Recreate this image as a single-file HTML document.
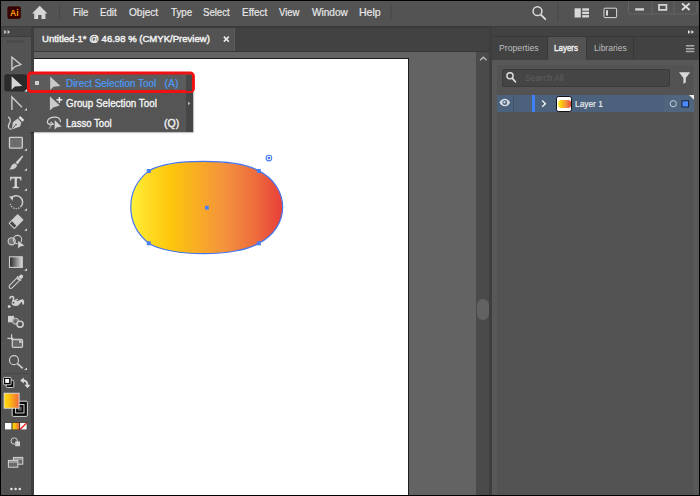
<!DOCTYPE html>
<html><head><meta charset="utf-8">
<style>
*{margin:0;padding:0;box-sizing:border-box}
html,body{width:700px;height:496px;overflow:hidden;background:#000}
body{font-family:"Liberation Sans",sans-serif;position:relative}
.a{position:absolute}
.tx{position:absolute;white-space:nowrap;transform-origin:0 50%;display:block}
svg{position:absolute;left:0;top:0;overflow:visible}
</style></head><body>
<!-- menu bar -->
<div class="a" style="left:1px;top:1px;width:698px;height:25px;background:#535353"></div>
<div class="a" style="left:1px;top:26px;width:698px;height:1px;background:#3b3b3b;z-index:2"></div>
<div class="a" style="left:31px;top:27px;width:458px;height:1px;background:#3b3b3b;z-index:2"></div>
<!-- doc tab strip -->
<div class="a" style="left:31px;top:27px;width:458px;height:24px;background:#424242"></div>
<div class="a" style="left:34px;top:28px;width:201px;height:23px;background:#535353;border-right:1px solid #5c5c5c"></div>
<div class="a" style="left:31px;top:51px;width:458px;height:1px;background:#383838"></div>
<!-- canvas area -->
<div class="a" style="left:34px;top:52px;width:442px;height:443px;background:#636363"></div>
<div class="a" style="left:34px;top:57.6px;width:375px;height:438px;background:#1c1c1c"></div>
<div class="a" style="left:34px;top:58.6px;width:374px;height:437px;background:#fff"></div>
<!-- v scrollbar -->
<div class="a" style="left:476px;top:52px;width:13px;height:443px;background:#4a4a4a"></div>
<div class="a" style="left:477px;top:299px;width:12px;height:21px;border-radius:6px;background:#626262"></div>
<!-- left toolbar -->
<div class="a" style="left:1px;top:27px;width:30px;height:468px;background:#535353"></div>
<div class="a" style="left:1px;top:27px;width:30px;height:9px;background:#464646"></div>
<div class="a" style="left:1px;top:36px;width:30px;height:1px;background:#3c3c3c"></div>
<div class="a" style="left:31px;top:27px;width:3px;height:468px;background:#3e3e3e"></div>
<div class="a" style="left:3px;top:373px;width:26px;height:1px;background:#484848"></div>
<!-- right dock -->
<div class="a" style="left:489px;top:27px;width:3px;height:468px;background:#3e3e3e"></div>
<div class="a" style="left:492px;top:27px;width:207px;height:468px;background:#585858"></div>
<div class="a" style="left:492px;top:27px;width:207px;height:9px;background:#424242"></div>
<div class="a" style="left:492px;top:36px;width:207px;height:1px;background:#383838"></div>
<div class="a" style="left:492px;top:37px;width:207px;height:23px;background:#424242"></div>
<div class="a" style="left:548px;top:37px;width:38px;height:23px;background:#535353"></div>
<div class="a" style="left:547px;top:37px;width:1px;height:22px;background:#383838"></div>
<div class="a" style="left:586px;top:37px;width:1px;height:22px;background:#383838"></div>
<div class="a" style="left:633px;top:37px;width:1px;height:22px;background:#383838"></div>
<div class="a" style="left:497px;top:65px;width:198px;height:430px;background:#535353"></div>
<div class="a" style="left:694px;top:65px;width:1.3px;height:430px;background:#5d5d5d"></div>
<div class="a" style="left:0;top:494.7px;width:700px;height:1.3px;background:#000"></div>
<!-- search box -->
<div class="a" style="left:502px;top:69px;width:168px;height:18px;background:#454545;border:1px solid #3b3b3b;border-radius:2px"></div>
<!-- layer row -->
<div class="a" style="left:497px;top:95px;width:197px;height:17px;background:#4c627c"></div>
<div class="a" style="left:513px;top:95px;width:1.4px;height:17px;background:#40536a"></div>
<div class="a" style="left:532px;top:95px;width:3px;height:17px;background:#4080f5"></div>
<div class="a" style="left:664px;top:95px;width:30px;height:17px;background:#50667f"></div>
<div class="a" style="left:556px;top:95.5px;width:16px;height:16.5px;background:#fff;border:1px solid #111;border-radius:2.5px"></div>
<div class="a" style="left:558px;top:100px;width:12.5px;height:7.5px;border-radius:3px;background:linear-gradient(90deg,#fff33b 0%,#fdc70c 26%,#f3903f 63%,#ed683c 84%,#e93e3a 100%)"></div>
<!-- flyout -->
<div class="a" style="left:29px;top:73px;width:164px;height:58.5px;background:#555555;box-shadow:0.8px 1.2px 1.6px rgba(0,0,0,.6)"></div>
<div class="a" style="left:186px;top:73px;width:7px;height:58.5px;background:#464646"></div>
<svg width="700" height="496" viewBox="0 0 700 496"><rect x="28.4" y="73.1" width="165" height="18.4" rx="3" fill="#5c5c5c" stroke="#f01212" stroke-width="3"/></svg>
<div class="a" style="left:186px;top:74.5px;width:6px;height:16px;background:#484848"></div>
<div class="a" style="left:35px;top:81.3px;width:4px;height:4.2px;background:#cfcfcf"></div>
<span class="tx" style="left:72.92px;top:5.06px;font-size:10.5px;line-height:14px;color:#e8e8e8;transform:scaleX(0.9071);-webkit-text-stroke:0.2px #e8e8e8">File</span>
<span class="tx" style="left:100.31px;top:5.06px;font-size:10.5px;line-height:14px;color:#e8e8e8;transform:scaleX(0.9209);-webkit-text-stroke:0.2px #e8e8e8">Edit</span>
<span class="tx" style="left:129.24px;top:5.06px;font-size:10.5px;line-height:14px;color:#e8e8e8;transform:scaleX(0.9600);-webkit-text-stroke:0.2px #e8e8e8">Object</span>
<span class="tx" style="left:171.28px;top:5.06px;font-size:10.5px;line-height:14px;color:#e8e8e8;transform:scaleX(0.9258);-webkit-text-stroke:0.2px #e8e8e8">Type</span>
<span class="tx" style="left:203.36px;top:5.06px;font-size:10.5px;line-height:14px;color:#e8e8e8;transform:scaleX(0.9108);-webkit-text-stroke:0.2px #e8e8e8">Select</span>
<span class="tx" style="left:241.59px;top:5.06px;font-size:10.5px;line-height:14px;color:#e8e8e8;transform:scaleX(0.9500);-webkit-text-stroke:0.2px #e8e8e8">Effect</span>
<span class="tx" style="left:279.40px;top:5.06px;font-size:10.5px;line-height:14px;color:#e8e8e8;transform:scaleX(0.9055);-webkit-text-stroke:0.2px #e8e8e8">View</span>
<span class="tx" style="left:312.00px;top:5.06px;font-size:10.5px;line-height:14px;color:#e8e8e8;transform:scaleX(0.9600);-webkit-text-stroke:0.2px #e8e8e8">Window</span>
<span class="tx" style="left:359.25px;top:5.06px;font-size:10.5px;line-height:14px;color:#e8e8e8;transform:scaleX(1.0049);-webkit-text-stroke:0.2px #e8e8e8">Help</span>
<span class="tx" style="left:41.50px;top:33.41px;font-size:9.5px;line-height:12px;color:#f0f0f0;transform:scaleX(1.0053);-webkit-text-stroke:0.45px #f0f0f0">Untitled-1* @ 46.98 % (CMYK/Preview)</span>
<span class="tx" style="left:65.69px;top:76.16px;font-size:10.5px;line-height:14px;color:#4a9af8;transform:scaleX(0.9445);-webkit-text-stroke:0.2px #4a9af8">Direct Selection Tool</span>
<span class="tx" style="left:164.40px;top:76.16px;font-size:10.5px;line-height:14px;color:#4a9af8;transform:scaleX(1.0000);-webkit-text-stroke:0.2px #4a9af8">(A)</span>
<span class="tx" style="left:66.05px;top:96.06px;font-size:10.5px;line-height:14px;color:#f4f4f4;transform:scaleX(0.9339);-webkit-text-stroke:0.35px #f4f4f4">Group Selection Tool</span>
<span class="tx" style="left:65.83px;top:115.66px;font-size:10.5px;line-height:14px;color:#f4f4f4;transform:scaleX(0.9125);-webkit-text-stroke:0.35px #f4f4f4">Lasso Tool</span>
<span class="tx" style="left:163.50px;top:115.66px;font-size:10.5px;line-height:14px;color:#f4f4f4;transform:scaleX(1.0053);-webkit-text-stroke:0.35px #f4f4f4">(Q)</span>
<span class="tx" style="left:498.88px;top:41.88px;font-size:9px;line-height:12px;color:#bebebe;transform:scaleX(0.9650)">Properties</span>
<span class="tx" style="left:554.45px;top:41.88px;font-size:9px;line-height:12px;color:#f6f6f6;transform:scaleX(0.8876);-webkit-text-stroke:0.35px #f6f6f6">Layers</span>
<span class="tx" style="left:593.69px;top:41.88px;font-size:9px;line-height:12px;color:#bebebe;transform:scaleX(0.9468)">Libraries</span>
<span class="tx" style="left:524.54px;top:71.58px;font-size:9px;line-height:12px;color:#5f5f5f;transform:scaleX(0.9544)">Search All</span>
<span class="tx" style="left:575.02px;top:98.18px;font-size:9px;line-height:12px;color:#f0f0f0;transform:scaleX(0.9276);-webkit-text-stroke:0.15px #f0f0f0">Layer 1</span><svg width="700" height="496" viewBox="0 0 700 496">
<defs>
<linearGradient id="og" x1="0" y1="0" x2="1" y2="0">
<stop offset="0" stop-color="#fff33b"/><stop offset="0.09" stop-color="#ffdf28"/><stop offset="0.26" stop-color="#fdc70c"/><stop offset="0.63" stop-color="#f3903f"/><stop offset="0.84" stop-color="#ed683c"/><stop offset="1" stop-color="#e93e3a"/>
</linearGradient>
<linearGradient id="sw" x1="0" y1="0" x2="1" y2="0">
<stop offset="0" stop-color="#ffdd10"/><stop offset="0.35" stop-color="#fcc010"/><stop offset="1" stop-color="#f0683a"/>
</linearGradient>
<linearGradient id="gg" x1="0" y1="0" x2="1" y2="0">
<stop offset="0" stop-color="#262626"/><stop offset="1" stop-color="#dcdcdc"/>
</linearGradient>
</defs>
<!-- ===== artwork ===== -->
<g id="art">
<path d="M148.7,170.9 C170,158.2 237,158.2 258.8,170.9 C290.6,187 290.6,227 258.8,243.2 C237,257.1 170,257.1 148.7,243.2 C124.8,224 124.8,190 148.7,170.9 Z" fill="url(#og)" stroke="#4575ee" stroke-width="1.2"/>
<rect x="146.8" y="169" width="4" height="4" fill="#4a80f5"/>
<rect x="256.9" y="169" width="4" height="4" fill="#4a80f5"/>
<rect x="146.8" y="241.3" width="4" height="4" fill="#4a80f5"/>
<rect x="256.9" y="241.3" width="4" height="4" fill="#4a80f5"/>
<rect x="205" y="205.8" width="3.8" height="3.8" fill="#4a80f5"/>
<circle cx="268.9" cy="158.1" r="2.8" fill="#fff" stroke="#4a7cf0" stroke-width="1.1"/>
<circle cx="268.9" cy="158.1" r="1.25" fill="#3a6cf0"/>
</g>
<!-- ===== menubar icons ===== -->
<g id="mb">
<rect x="7" y="6" width="14.2" height="13.3" rx="2.2" fill="#360000" stroke="#5e6464" stroke-width="0.6"/>
<text x="10.1" y="16" font-family="Liberation Sans" font-weight="700" font-size="8.6" fill="#ff9d0a">Ai</text>
<path d="M39.7,5.8 L47.4,13.4 L45.4,13.4 L45.4,19.1 L41.5,19.1 L41.5,15 L38.2,15 L38.2,19.1 L34.2,19.1 L34.2,13.4 L32,13.4 Z" fill="#d6d6d6"/>
<rect x="59" y="4" width="1" height="16" fill="#474747"/>
<rect x="390.5" y="4" width="1" height="16" fill="#474747"/>
<circle cx="537.5" cy="11.2" r="4.4" fill="none" stroke="#dcdcdc" stroke-width="1.5"/>
<path d="M540.8,14.6 L545.3,19.2" stroke="#dcdcdc" stroke-width="1.8" stroke-linecap="round"/>
<rect x="557.5" y="4" width="1" height="16" fill="#474747"/>
<rect x="574.6" y="8.3" width="6.2" height="9.2" fill="#d8d8d8"/>
<rect x="582.2" y="8.3" width="6.8" height="2.4" fill="#d8d8d8"/>
<rect x="582.2" y="11.7" width="6.8" height="2.4" fill="#d8d8d8"/>
<rect x="582.2" y="15.1" width="6.8" height="2.4" fill="#d8d8d8"/>
<rect x="604" y="8.2" width="12.6" height="9.4" rx="0.8" fill="#484848" stroke="#d8d8d8" stroke-width="1"/>
<rect x="606" y="10.2" width="2" height="5.4" fill="#d8d8d8"/>
<!-- window controls -->
<path d="M628.5,1 L628.5,11.5 Q628.5,14 631,14 L694.5,14 Q697,14 697,11.5 L697,1" fill="none" stroke="#656565" stroke-width="1"/>
<rect x="651.3" y="1" width="1" height="13" fill="#656565"/>
<rect x="673.5" y="1" width="1" height="13" fill="#656565"/>
<rect x="635.2" y="8.2" width="8.8" height="2.4" fill="#d2d2d2"/>
<rect x="659" y="4.9" width="7.4" height="5" fill="none" stroke="#d2d2d2" stroke-width="1.8"/>
<path d="M682,3.4 L689.6,10 M689.6,3.4 L682,10" stroke="#dedede" stroke-width="1.9"/>
</g>
<!-- doc tab close -->
<path d="M223.8,36.6 L228.8,41.6 M228.8,36.6 L223.8,41.6" stroke="#e8e8e8" stroke-width="1.6"/>
<!-- scrollbar chevron -->
<path d="M480,60.3 L483.3,57.2 L486.6,60.3" fill="none" stroke="#bdbdbd" stroke-width="1.3"/>
<!-- ===== toolbar ===== -->
<g id="tb" fill="none" stroke="#cdcdcd" stroke-width="1.35" stroke-linejoin="miter">
<!-- collapse chevrons -->
<path d="M4.2,29.8 L6.6,32 L4.2,34.2 Z M7.6,29.8 L10,32 L7.6,34.2 Z" fill="#cfcfcf" stroke="none"/>
<!-- grip -->
<g stroke="none" fill="#474747">
<rect x="7" y="40" width="1.3" height="3"/><rect x="9" y="40" width="1.3" height="3"/><rect x="11" y="40" width="1.3" height="3"/><rect x="13" y="40" width="1.3" height="3"/><rect x="15" y="40" width="1.3" height="3"/><rect x="17" y="40" width="1.3" height="3"/><rect x="19" y="40" width="1.3" height="3"/><rect x="21" y="40" width="1.3" height="3"/><rect x="23" y="40" width="1.3" height="3"/>
</g>
<!-- selection tool -->
<path d="M11.9,57.2 L11.9,69.6 L15,66.6 L20.8,64.6 Z"/>
<!-- direct selection (active) -->
<rect x="4.4" y="74.3" width="22.5" height="17.1" rx="2" fill="#2b2b2b" stroke="none"/>
<path d="M11.6,76.2 L11.6,89.8 L14.9,86.6 L22.2,85.9 Z" fill="#d4d4d4" stroke="none"/>
<path d="M27,89 L27,91.5 L24.2,91.5 Z" fill="#e8e8e8" stroke="none"/>
<!-- third tool -->
<path d="M11.9,110 L11.9,97 L22,107.2"/>
<path d="M27,108 L27,110.6 L24.2,110.6 Z" fill="#d8d8d8" stroke="none"/>
<!-- pen / curvature -->
<g>
<path d="M11.7,129.5 L12.9,122.3 L17.7,118.5 L21.4,122.4 L20.2,126.6 Z" fill="#cdcdcd" stroke="none"/>
<path d="M18.5,117.7 L20.3,115.9 L24.3,120 L22.4,121.8 Z" fill="#dcdcdc" stroke="none"/>
<path d="M12.3,128.6 L15.6,125" stroke="#535353" stroke-width="0.9"/>
<circle cx="16" cy="124.5" r="0.8" fill="#535353" stroke="none"/>
<path d="M8,117.2 C10.4,118 11,120.4 9.6,122.8 C8.2,125.2 7.8,127.8 9.8,128.8 L11.6,129.2" stroke-width="1.3"/>
</g>
<!-- rectangle -->
<rect x="9.5" y="137.3" width="12.8" height="10.8" rx="0.8" fill="#6c6c6c"/>
<path d="M27,148.2 L27,150.8 L24.2,150.8 Z" fill="#d8d8d8" stroke="none"/>
<!-- paintbrush -->
<g stroke="none" fill="#cfcfcf">
<path d="M22.3,155.6 L23.2,156.5 L17.6,164.4 L15.6,162.6 Z"/>
<path d="M15,163.2 L17,165 C17,168 13.5,169.8 9.2,169.4 C11.4,168.2 10.6,164.2 15,163.2 Z"/>
</g>
<path d="M27,168.2 L27,170.8 L24.2,170.8 Z" fill="#d8d8d8" stroke="none"/>
<!-- type -->
<path d="M10.1,176.8 L21.4,176.8 L21.4,180.4 L20.3,180.4 L20,178.6 L16.9,178.6 L16.9,186.6 L18.8,187 L18.8,188.2 L12.7,188.2 L12.7,187 L14.6,186.6 L14.6,178.6 L11.5,178.6 L11.2,180.4 L10.1,180.4 Z" fill="#d4d4d4" stroke="none"/>
<path d="M27,188.2 L27,190.8 L24.2,190.8 Z" fill="#d8d8d8" stroke="none"/>
<!-- rotate -->
<path d="M11.2,198.2 A6.3,6.3 0 0 1 21.2,206.2" stroke-width="1.5"/>
<path d="M21.2,206.2 A6.3,6.3 0 0 1 10.2,204" stroke-width="1.3" stroke-dasharray="1.2 1.3"/>
<path d="M9,196.6 L13.2,196.2 L12.6,200.8 Z" fill="#cfcfcf" stroke="none"/>
<path d="M27,208.2 L27,210.8 L24.2,210.8 Z" fill="#d8d8d8" stroke="none"/>
<!-- eraser -->
<g transform="translate(16,221.6) rotate(-45)">
<rect x="-6.6" y="-4.2" width="13.2" height="8.4" rx="0.8" fill="#cfcfcf" stroke="none"/>
<rect x="-5.6" y="-3.1" width="3" height="6.2" fill="#484848" stroke="none"/>
</g>
<path d="M27,228.2 L27,230.8 L24.2,230.8 Z" fill="#d8d8d8" stroke="none"/>
<!-- shape builder -->
<circle cx="11.7" cy="241.3" r="3.6" stroke-width="1.1" fill="#747474"/>
<circle cx="17.5" cy="239.6" r="4.2" stroke-width="1.1"/>
<path d="M17.9,240.4 L17.9,249.1 L20.3,246.8 L24.9,245.8 Z" fill="#d4d4d4" stroke="#535353" stroke-width="0.5"/>
<!-- gradient -->
<rect x="9.5" y="256.8" width="12.8" height="10.6" fill="url(#gg)" stroke-width="1.1"/>
<path d="M27,268.2 L27,270.8 L24.2,270.8 Z" fill="#e8e8e8" stroke="none"/>
<!-- eyedropper -->
<g>
<path d="M10.2,288.4 C8.8,287.4 9,286 10,284.8 L16.8,278 L19.4,280.6 L12.6,287.4 C11.6,288.4 11,288.8 10.2,288.4 Z" stroke-width="1.1"/>
<path d="M16.6,277 L20.6,281 L21.6,280 L17.6,276 Z M18.2,277 L20.2,275 C21.2,274.2 22.4,274.6 22.8,275.4 C23.4,276.2 23.2,277.2 22.4,278 L20.6,279.6 Z" fill="#d4d4d4" stroke="none"/>
</g>
<!-- puppet warp -->
<g>
<path d="M9.9,298.8 C9.8,296.2 13.2,295.6 13.6,298 C13.9,299.8 12.6,301 12.6,303" stroke="#d4d4d4" stroke-width="1.6" fill="none"/>
<path d="M11.9,301.6 C13.4,300.8 15.4,299.2 17.6,298.5 L18.3,300.7 C19.8,300 21.4,298.9 22.7,299.2 C24.4,299.8 24.4,302.6 23.9,304.6 L22.2,304.6 C22.4,303.1 22.2,301.9 21.4,301.9 C20.2,303.5 18.4,305.9 15.6,306.1 C13.6,306.1 12.2,305.1 11.6,304.1 Z" fill="#cfcfcf" stroke="none"/>
<circle cx="13.5" cy="302.7" r="0.9" fill="#4a4a4a" stroke="none"/>
<circle cx="17.3" cy="300.4" r="0.7" fill="#4a4a4a" stroke="none"/>
<circle cx="9.2" cy="306.6" r="1.45" fill="#dcdcdc" stroke="none"/>
</g>
<!-- blend -->
<rect x="8" y="315.9" width="6" height="6.4" fill="#d0d0d0" stroke="none"/>
<circle cx="15.5" cy="321.2" r="3.1" fill="#7c7c7c" stroke="#c4c4c4" stroke-width="1"/>
<circle cx="15.6" cy="321.4" r="0.9" fill="#5a5a5a" stroke="none"/>
<circle cx="20.1" cy="324.2" r="3.1" fill="#5c5c5c" stroke="#d2d2d2" stroke-width="1.4"/>
<circle cx="20.1" cy="324.2" r="0.9" fill="#484848" stroke="none"/>
<!-- artboard -->
<path d="M11.6,334.2 L11.6,340 M7.4,338.4 L13.4,338.4" stroke-width="1.2"/>
<rect x="12.3" y="339.5" width="10.2" height="7.8" rx="1" fill="#686868" stroke-width="1.3"/>
<path d="M19.2,339.2 L22.8,342.8 L19.2,342.8 Z" fill="#d4d4d4" stroke="none"/>
<!-- zoom -->
<circle cx="14" cy="360.2" r="4.5" stroke-width="1.2"/>
<path d="M17.4,363.6 L22.8,368.4" stroke-width="1.6"/>
<path d="M27,367.4 L27,370 L24.2,370 Z" fill="#d8d8d8" stroke="none"/>
<!-- default fill/stroke -->
<rect x="6.2" y="380.3" width="7.6" height="7.2" rx="1" fill="#0c0c0c" stroke="#dcdcdc" stroke-width="0.9"/>
<rect x="9.2" y="383" width="1.8" height="1.8" fill="#6a6a6a" stroke="none"/>
<rect x="3.5" y="377.4" width="7.6" height="7.4" rx="1" fill="#0c0c0c" stroke="#dcdcdc" stroke-width="0.9"/>
<rect x="5.2" y="379" width="3.9" height="3.9" fill="#fff" stroke="none"/>
<!-- swap -->
<path d="M22.8,380.4 C26.2,380.4 27.4,382.6 27.4,385.4" stroke="#dcdcdc" stroke-width="1.8"/>
<path d="M20.2,380.6 L23.8,377.4 L23.8,383.6 Z M27.5,388.2 L24.4,384.8 L30.4,384.8 Z" fill="#dcdcdc" stroke="none"/>
<!-- stroke swatch -->
<rect x="12.2" y="401.2" width="15.2" height="15.2" rx="1.2" fill="#0a0a0a" stroke="#e6e6e6" stroke-width="0.9"/>
<rect x="15.6" y="404.6" width="8.4" height="8.4" fill="#0a0a0a" stroke="#e6e6e6" stroke-width="0.9"/>
<rect x="17.8" y="406.8" width="4" height="4" fill="#555" stroke="none"/>
<!-- fill swatch -->
<rect x="4.1" y="393.2" width="15" height="15" fill="url(#sw)" stroke="#e2e2e2" stroke-width="0.9"/>
<!-- colour mode row -->
<rect x="4.4" y="422.4" width="22.8" height="7.6" fill="#2a2a2a" stroke="none"/>
<rect x="4.9" y="422.9" width="6.6" height="6.6" fill="#fff" stroke="none"/>
<rect x="12.5" y="422.9" width="6.8" height="6.6" fill="url(#sw)" stroke="none"/>
<rect x="20.1" y="422.9" width="6.6" height="6.6" fill="#fff" stroke="none"/>
<path d="M20.3,429.3 L26.5,423.1" stroke="#e81010" stroke-width="1.3"/>
<!-- draw mode -->
<circle cx="14.2" cy="441" r="3.2" stroke-width="1"/>
<rect x="15.2" y="441.4" width="4.8" height="4.8" fill="#cfcfcf" stroke="none"/>
<!-- screen mode -->
<rect x="13.4" y="457.4" width="9.4" height="6.8" fill="#6a6a6a" stroke="#d4d4d4" stroke-width="1"/>
<rect x="8.4" y="460.4" width="9.4" height="6.8" fill="#6a6a6a" stroke="#d4d4d4" stroke-width="1"/>
<path d="M8.4,462 L17.8,462 M13.4,459 L22.8,459" stroke="#d4d4d4" stroke-width="0.9"/>
<!-- more -->
<circle cx="11.4" cy="489" r="1.3" fill="#e2e2e2" stroke="none"/><circle cx="15.6" cy="489" r="1.3" fill="#e2e2e2" stroke="none"/><circle cx="19.8" cy="489" r="1.3" fill="#e2e2e2" stroke="none"/>
</g>
<!-- ===== right panel icons ===== -->
<g id="rp">
<path d="M688,29.9 L690.8,32 L688,34.1 Z M691.3,29.9 L694.1,32 L691.3,34.1 Z" fill="#d4d4d4"/>
<path d="M685.9,45.8 L694.3,45.8 M685.9,48.7 L694.3,48.7 M685.9,51.6 L694.3,51.6" stroke="#ababab" stroke-width="1.5"/>
<circle cx="510" cy="75.8" r="3.1" fill="none" stroke="#e0e0e0" stroke-width="1.4"/>
<path d="M512.4,78.4 L515.4,81.8" stroke="#e0e0e0" stroke-width="1.7" stroke-linecap="round"/>
<path d="M679,72.2 L690.2,72.2 L685.8,78 L685.8,82.4 L683.4,83.8 L683.4,78 Z" fill="#d8d8d8"/>
<!-- eye -->
<path d="M499.5,102.6 C502,97.6 507.6,97.6 510.1,102.6 C507.6,107.6 502,107.6 499.5,102.6 Z" fill="#d9e0e8"/>
<circle cx="504.8" cy="102.6" r="2.4" fill="#46597180"/>
<circle cx="504.8" cy="102.6" r="2.3" fill="#4a5f79"/>
<circle cx="504.5" cy="102.3" r="1.15" fill="#d9e0e8"/>
<!-- chevron -->
<path d="M542.2,100.6 L545.4,103.7 L542.2,106.8" fill="none" stroke="#f0f0f0" stroke-width="1.4"/>
<!-- target circle, sel square, corner -->
<circle cx="673.3" cy="103.7" r="3.1" fill="none" stroke="#c9d0d8" stroke-width="1"/>
<rect x="682" y="100.8" width="6.6" height="6.2" fill="#4a8cff" stroke="#16203a" stroke-width="1"/>
<path d="M689,95 L694,95 L694,99.8 Z" fill="#f0f0f0"/>
</g>
<!-- ===== flyout icons ===== -->
<g id="fo">
<path d="M50.2,76.4 L50.2,90 L53.4,86.8 L60.4,86 Z" fill="#cacaca"/>
<path d="M49.9,96.3 L49.9,110.6 L53.1,107.4 L59.8,105.6 Z" fill="#cacaca"/>
<path d="M59.4,96.9 L59.4,102.7 M56.5,99.8 L62.3,99.8" stroke="#535353" stroke-width="2.6"/><path d="M59.4,96.9 L59.4,102.7 M56.5,99.8 L62.3,99.8" stroke="#ececec" stroke-width="1.5"/>
<path d="M54.2,124 C50.6,125.6 47,124.4 47.4,121.4 C47.8,118.2 52.4,116.6 56,117.2 C59.4,117.8 61,120 60.2,122" fill="none" stroke="#d4d4d4" stroke-width="1.2"/>
<path d="M51,123 C52.2,122 52.6,123.6 51.8,124.6 C51,125.8 50,126.6 49.4,128.6" fill="none" stroke="#d4d4d4" stroke-width="1"/>
<circle cx="51.2" cy="123.4" r="1.2" fill="none" stroke="#d4d4d4" stroke-width="0.8"/>
<path d="M54.4,119.6 L54.4,130.1 L57,127.6 L62.1,126.8 Z" fill="#d4d4d4" stroke="#535353" stroke-width="0.5"/>
<path d="M188.2,101.6 L190.2,103.4 L188.2,105.2 Z" fill="#c8c8c8"/>
</g>
</svg>
</body></html>
